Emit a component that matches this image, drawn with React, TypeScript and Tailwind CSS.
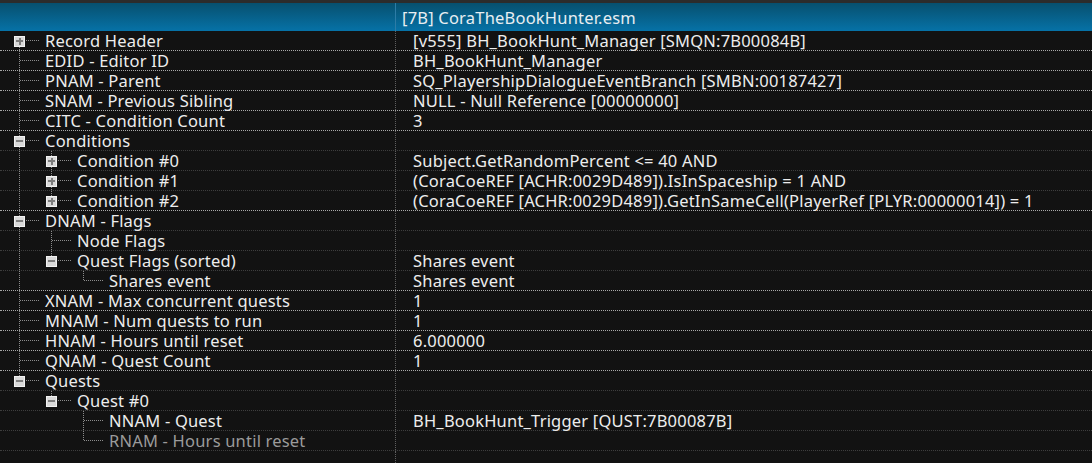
import React from 'react';

type Row = {
  label: string;
  level: number;
  exp?: 'plus' | 'minus';
  value?: string;
  dim?: boolean;
};

const ROWS: Row[] = [
  { label: 'Record Header', level: 0, exp: 'plus', value: '[v555] BH_BookHunt_Manager [SMQN:7B00084B]' },
  { label: 'EDID - Editor ID', level: 0, value: 'BH_BookHunt_Manager' },
  { label: 'PNAM - Parent', level: 0, value: 'SQ_PlayershipDialogueEventBranch [SMBN:00187427]' },
  { label: 'SNAM - Previous Sibling', level: 0, value: 'NULL - Null Reference [00000000]' },
  { label: 'CITC - Condition Count', level: 0, value: '3' },
  { label: 'Conditions', level: 0, exp: 'minus' },
  { label: 'Condition #0', level: 1, exp: 'plus', value: 'Subject.GetRandomPercent <= 40 AND' },
  { label: 'Condition #1', level: 1, exp: 'plus', value: '(CoraCoeREF [ACHR:0029D489]).IsInSpaceship = 1 AND' },
  { label: 'Condition #2', level: 1, exp: 'plus', value: '(CoraCoeREF [ACHR:0029D489]).GetInSameCell(PlayerRef [PLYR:00000014]) = 1' },
  { label: 'DNAM - Flags', level: 0, exp: 'minus' },
  { label: 'Node Flags', level: 1 },
  { label: 'Quest Flags (sorted)', level: 1, exp: 'minus', value: 'Shares event' },
  { label: 'Shares event', level: 2, value: 'Shares event' },
  { label: 'XNAM - Max concurrent quests', level: 0, value: '1' },
  { label: 'MNAM - Num quests to run', level: 0, value: '1' },
  { label: 'HNAM - Hours until reset', level: 0, value: '6.000000' },
  { label: 'QNAM - Quest Count', level: 0, value: '1' },
  { label: 'Quests', level: 0, exp: 'minus' },
  { label: 'Quest #0', level: 1, exp: 'minus' },
  { label: 'NNAM - Quest', level: 2, value: 'BH_BookHunt_Trigger [QUST:7B00087B]' },
  { label: 'RNAM - Hours until reset', level: 2, dim: true },
];

// does a later sibling exist at this level (before climbing back to a lower level)
const hasNextSibling = (idx: number, level: number) => {
  for (let j = idx + 1; j < ROWS.length; j++) {
    if (ROWS[j].level < level) return false;
    if (ROWS[j].level === level) return true;
  }
  return false;
};

const cx = (level: number) => 19 + level * 32;
const LINE = '#8c8c8c';

const TreeGuide: React.FC<{ idx: number }> = ({ idx }) => {
  const row = ROWS[idx];
  const w = cx(row.level) + 20;
  const parts: React.ReactNode[] = [];

  // ancestor lines passing through
  for (let l = 0; l < row.level; l++) {
    if (hasNextSibling(idx, l)) {
      parts.push(<line key={`a${l}`} x1={cx(l) + 0.5} y1={0} x2={cx(l) + 0.5} y2={19} />);
    }
  }
  const c = cx(row.level) + 0.5;
  if (idx !== 0) parts.push(<line key="up" x1={c} y1={0} x2={c} y2={10} />);
  if (hasNextSibling(idx, row.level)) parts.push(<line key="dn" x1={c} y1={10} x2={c} y2={19} />);
  parts.push(<line key="h" x1={cx(row.level) + 1} y1={9.5} x2={cx(row.level) + 20} y2={9.5} />);

  const bx = cx(row.level) - 5;
  return (
    <svg width={w} height={19} className="shrink-0 block">
      <g stroke={LINE} strokeWidth={1} strokeDasharray="1 1">{parts}</g>
      {row.exp && (
        <g>
          <rect x={bx} y={5} width={11} height={11} fill="#f2f2f2" />
          <rect x={bx + 1} y={6} width={9} height={9} fill="#d9d9d9" />
          <rect x={bx + 2} y={9} width={7} height={2} fill="#7d7d7d" />
          {row.exp === 'plus' && <rect x={bx + 5} y={7} width={2} height={7} fill="#7d7d7d" />}
        </g>
      )}
    </svg>
  );
};

export default function App() {
  return (
    <div
      className="w-[1092px] h-[463px] bg-[#121212] flex flex-col overflow-hidden text-[16.5px] tracking-[0.2px] leading-[19px] text-[#ededed]"
      style={{ fontFamily: '"Noto Sans", "Open Sans", sans-serif' }}
    >
      <div className="h-[3px] bg-[#2c2c2c] shrink-0" />
      <div className="h-[28px] shrink-0 flex bg-gradient-to-b from-[#07506f] to-[#0672a7]">
        <div className="w-[395px] shrink-0" />
        <div className="flex-1 border-l border-[#2d7ca6] pl-[6px] flex items-center text-[#e8eef2]">
          [7B] CoraTheBookHunter.esm
        </div>
      </div>

      {ROWS.map((row, i) => {
        const next = ROWS[i + 1];
        const bright = next && next.level === 0;
        return (
          <div
            key={i}
            className={`h-[20px] shrink-0 flex border-b border-dotted ${bright ? 'border-[#a9a9a9]' : 'border-[#3e3e3e]'}`}
          >
            <div className="w-[395px] shrink-0 flex items-center">
              <TreeGuide idx={i} />
              <span className={`pl-[6px] whitespace-nowrap ${row.dim ? 'text-[#9b9b9b]' : ''}`}>{row.label}</span>
            </div>
            <div className="flex-1 border-l border-dotted border-[#5e5e5e] pl-[17px] flex items-center whitespace-nowrap">
              {row.value}
            </div>
          </div>
        );
      })}

      <div className="flex-1 flex">
        <div className="w-[395px] shrink-0" />
        <div className="flex-1 border-l border-dotted border-[#5e5e5e]" />
      </div>
    </div>
  );
}
